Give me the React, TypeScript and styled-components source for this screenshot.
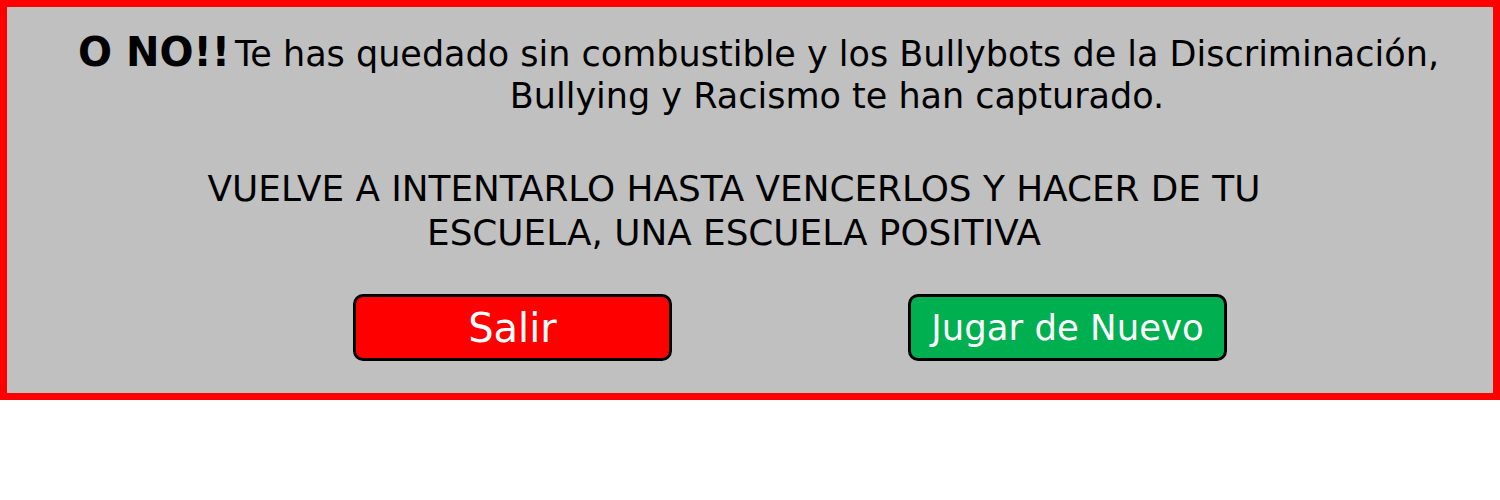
import React from "react";
import styled, { createGlobalStyle } from "styled-components";

const GlobalStyle = createGlobalStyle`
  html, body {
    margin: 0;
    padding: 0;
    background: #ffffff;
  }
  body {
    font-family: "DejaVu Sans", Verdana, sans-serif;
  }
`;

const Panel = styled.section`
  box-sizing: border-box;
  width: 1500px;
  height: 400px;
  border: 7px solid #ff0000;
  background: #c0c0c0;
  display: flex;
  flex-direction: column;
  align-items: center;
  padding-top: 24px;
  color: #000000;
`;

const Headline = styled.div`
  display: flex;
  align-items: baseline;
  justify-content: center;
  gap: 0;
  padding-left: 22px;
`;

const Exclaim = styled.strong`
  flex: none;
  font-size: 40px;
  font-weight: 700;
  line-height: 42px;
  white-space: nowrap;
`;

const Message = styled.p`
  flex: none;
  margin: 0;
  width: 1214px;
  font-size: 35px;
  line-height: 42px;
  text-align: center;
`;

const Notice = styled.p`
  margin: 50px 32px 0 0;
  width: 1090px;
  font-size: 35.8px;
  line-height: 44px;
  text-align: center;
  text-transform: uppercase;
`;

const Actions = styled.div`
  display: flex;
  justify-content: center;
  gap: 236px;
  margin-top: 39px;
  padding-left: 80px;
`;

const ActionButton = styled.button<{ $tone: "red" | "green"; $size: number }>`
  box-sizing: border-box;
  width: 319px;
  height: 67px;
  border: 3px solid #000000;
  border-radius: 10px;
  background: ${(p) => (p.$tone === "red" ? "#ff0000" : "#00b050")};
  color: #ffffff;
  font-family: "DejaVu Sans", Verdana, sans-serif;
  font-size: ${(p) => p.$size}px;
  line-height: 1;
  padding: 0;
  display: flex;
  align-items: center;
  justify-content: center;
  cursor: pointer;
`;

export default function App() {
  return (
    <>
      <GlobalStyle />
      <Panel>
        <Headline>
          <Exclaim>O NO!!</Exclaim>
          <Message>
            Te has quedado sin combustible y los Bullybots de la Discriminación,
            Bullying y Racismo te han capturado.
          </Message>
        </Headline>
        <Notice>
          Vuelve a intentarlo hasta vencerlos y hacer de tu escuela, una escuela
          positiva
        </Notice>
        <Actions>
          <ActionButton $tone="red" $size={40}>
            Salir
          </ActionButton>
          <ActionButton $tone="green" $size={35.5}>
            Jugar de Nuevo
          </ActionButton>
        </Actions>
      </Panel>
    </>
  );
}
